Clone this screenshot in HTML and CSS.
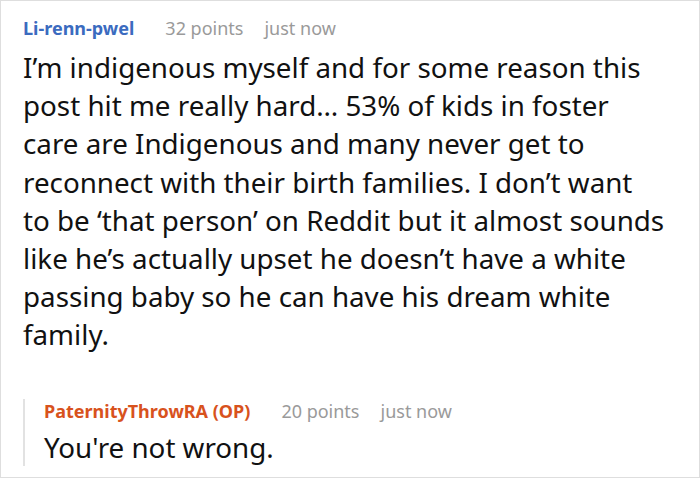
FILE: index.html
```html
<!DOCTYPE html>
<html>
<head>
<meta charset="utf-8">
<link rel="stylesheet" href="styles.css">
</head>
<body>
<div class="card">
  <div class="comment">
    <div class="meta">
      <span class="author">Li-renn-pwel</span>
      <span class="info">32 points</span>
      <span class="info">just now</span>
    </div>
    <p class="body">I’m indigenous myself and for some reason this post hit me really hard… 53% of kids in foster care are Indigenous and many never get to reconnect with their birth families. I don’t want to be ‘that person’ on Reddit but it almost sounds like he’s actually upset he doesn’t have a white passing baby so he can have his dream white family.</p>
    <div class="reply">
      <div class="meta">
        <span class="author op">PaternityThrowRA (OP)</span>
        <span class="info">20 points</span>
        <span class="info">just now</span>
      </div>
      <p class="body">You're not wrong.</p>
    </div>
  </div>
</div>
</body>
</html>
```

FILE: styles.css
```css
html, body {
  margin: 0;
  padding: 0;
  background: #fff;
}
.card {
  box-sizing: border-box;
  width: 700px;
  height: 478px;
  border: 1px solid #dedede;
  background: #fff;
  font-family: "Noto Sans", "Open Sans", sans-serif;
  color: #111;
  overflow: hidden;
}
.comment {
  width: 643px;
  padding: 15px 0 0 22px;
}
.meta {
  display: flex;
  gap: 21px;
  font-size: 18px;
  line-height: 24px;
}
.author {
  font-weight: 700;
  color: #3b6bbf;
  margin-right: 10px;
}
.author.op {
  color: #d8521d;
}
.info {
  color: #9a9a9a;
}
.body {
  margin: 8px 0 0 0;
  font-size: 27.75px;
  line-height: 38.2px;
}
.reply {
  margin-top: 56.6px;
  border-left: 2px solid #e2e2e2;
  padding-left: 19px;
}
.reply .meta {
  margin-top: -11px;
}
.reply .body {
  margin-top: 5px;
  margin-bottom: -7px;
}
```
